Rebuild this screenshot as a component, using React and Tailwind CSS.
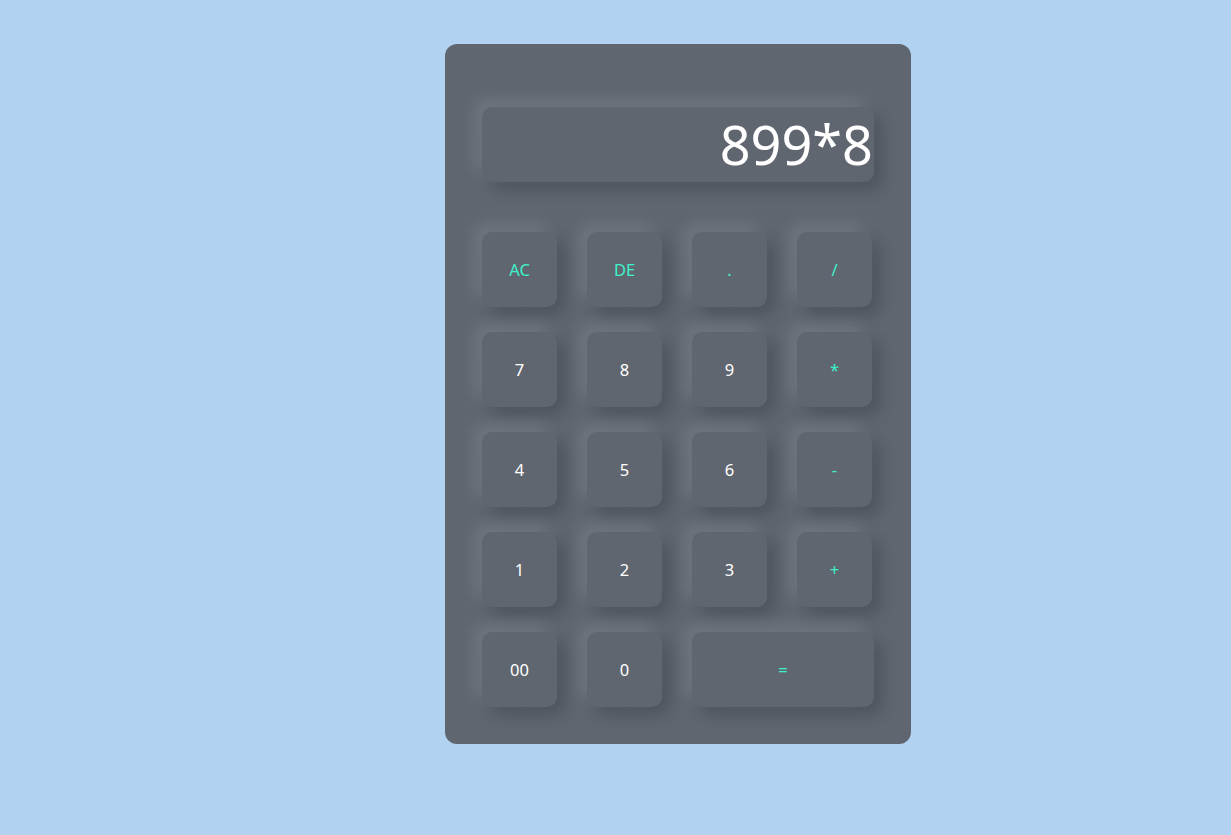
import React from "react";

const sh = "shadow-[-8px_-8px_16px_rgba(255,255,255,0.11),8px_8px_16px_rgba(0,0,0,0.18)]";

function Key({ label, accent, wide }) {
  return (
    <div
      className={`${wide ? "w-[182px]" : "w-[75px]"} h-[75px] rounded-[10px] bg-[#5f6670] ${sh} flex items-center justify-center text-[16.5px] ${accent ? "text-[#3ef2c9]" : "text-white"}`}
    >
      <span className="mt-[2px]">{label}</span>
    </div>
  );
}

export default function App() {
  const rows = [
    [["AC", 1], ["DE", 1], [".", 1], ["/", 1]],
    [["7"], ["8"], ["9"], ["*", 1]],
    [["4"], ["5"], ["6"], ["-", 1]],
    [["1"], ["2"], ["3"], ["+", 1]],
  ];
  return (
    <div className="w-[1231px] h-[835px] bg-[#b1d3f1] flex justify-start" style={{ fontFamily: '"Noto Sans", "Open Sans", sans-serif' }}>
      <div className="ml-[445px] mt-[44px] w-[466px] h-[700px] bg-[#5f6670] rounded-[12px] pt-[63px] pl-[37px]">
        <div className={`w-[392px] h-[75px] rounded-[10px] bg-[#5f6670] ${sh} flex items-center justify-end pr-[1px] text-white text-[54px] leading-none`}>
          <span className="-mt-[1px]">899*8</span>
        </div>
        <div className="mt-[50px] flex flex-col gap-[25px]">
          {rows.map((r, i) => (
            <div key={i} className="flex gap-[30px]">
              {r.map(([l, a]) => (
                <Key key={l} label={l} accent={!!a} />
              ))}
            </div>
          ))}
          <div className="flex gap-[30px]">
            <Key label="00" />
            <Key label="0" />
            <Key label="=" accent wide />
          </div>
        </div>
      </div>
    </div>
  );
}
